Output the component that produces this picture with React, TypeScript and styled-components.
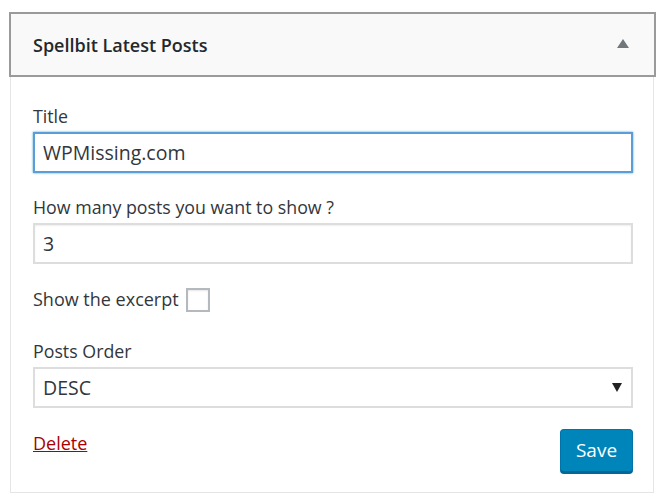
import React from "react";
import styled, { createGlobalStyle } from "styled-components";

const Global = createGlobalStyle`
  html, body { margin: 0; padding: 0; background: #ffffff; }
  body { font-family: "Open Sans", "Noto Sans", "Liberation Sans", sans-serif; color: #23282d; }
  * { box-sizing: border-box; }
`;

const Widget = styled.div`
  margin: 12px 0 0 9px;
  width: 647px;
`;

const Header = styled.div`
  height: 65px;
  border: 2px solid #9a9a9a;
  background: #f9f9f9;
  display: flex;
  align-items: center;
  justify-content: space-between;
  padding: 0 25px 0 22px;
`;

const HeaderTitle = styled.h3`
  margin: 0;
  font-size: 18px;
  font-weight: 600;
  color: #23282d;
  line-height: 24px;
`;

const Toggle = styled.span`
  width: 0;
  height: 0;
  border-left: 6px solid transparent;
  border-right: 6px solid transparent;
  border-bottom: 9px solid #72777c;
  margin-top: -2px;
`;

const Body = styled.div`
  margin: 0 2px 0 1px;
  border: 1px solid #e5e5e5;
  border-top: none;
  padding: 27px 20px 20px 22px;
  display: flex;
  flex-direction: column;
`;

const Field = styled.div<{ $gap?: number }>`
  display: flex;
  flex-direction: column;
  margin-top: ${(p) => p.$gap ?? 0}px;
`;

const Label = styled.label`
  font-size: 17.8px;
  line-height: 24px;
  color: #32373c;
  margin-bottom: 4px;
`;

const TextInput = styled.input<{ $focus?: boolean }>`
  width: 100%;
  height: 41px;
  font-family: inherit;
  font-size: 19.5px;
  color: #32373c;
  padding: 0 8px;
  background: #fff;
  border: 2px solid ${(p) => (p.$focus ? "#5b9dd9" : "#dddddd")};
  box-shadow: ${(p) => (p.$focus ? "0 0 2px rgba(30,140,190,0.8)" : "inset 0 1px 2px rgba(0,0,0,0.07)")};
  outline: none;
  border-radius: 0;
`;

const CheckRow = styled.div`
  display: flex;
  align-items: center;
  gap: 7px;
  margin-top: 22px;
  height: 26px;
`;

const CheckText = styled.span`
  font-size: 18px;
  line-height: 24px;
  color: #32373c;
`;

const CheckBox = styled.span`
  width: 24px;
  height: 24px;
  border: 2px solid #b4b9be;
  background: #fff;
  box-shadow: inset 0 1px 2px rgba(0, 0, 0, 0.1);
  margin-top: 2px;
`;

const SelectBox = styled.div`
  height: 41px;
  border: 2px solid #dddddd;
  background: #fff;
  display: flex;
  align-items: center;
  justify-content: space-between;
  padding: 0 9px 0 8px;
  font-size: 19.5px;
  color: #32373c;
`;

const SelectArrow = styled.span`
  width: 0;
  height: 0;
  border-left: 5px solid transparent;
  border-right: 5px solid transparent;
  border-top: 9px solid #222;
`;

const Actions = styled.div`
  display: flex;
  justify-content: space-between;
  align-items: flex-start;
  margin-top: 21px;
`;

const DeleteLink = styled.a`
  font-size: 18px;
  line-height: 24px;
  color: #a00;
  text-decoration: underline;
  margin-top: 2px;
  cursor: pointer;
`;

const SaveButton = styled.button`
  width: 73px;
  height: 43px;
  background: #0085ba;
  border: 1px solid #0073aa;
  border-bottom-color: #006799;
  box-shadow: 0 2px 0 #006799;
  border-radius: 4px;
  color: #fff;
  font-family: inherit;
  font-size: 19px;
  padding: 0 0 2px;
  cursor: pointer;
`;

export default function App() {
  return (
    <>
      <Global />
      <Widget>
        <Header>
          <HeaderTitle>Spellbit Latest Posts</HeaderTitle>
          <Toggle />
        </Header>
        <Body>
          <Field>
            <Label>Title</Label>
            <TextInput $focus defaultValue="WPMissing.com" />
          </Field>
          <Field $gap={22}>
            <Label>How many posts you want to show ?</Label>
            <TextInput defaultValue="3" />
          </Field>
          <CheckRow>
            <CheckText>Show the excerpt</CheckText>
            <CheckBox />
          </CheckRow>
          <Field $gap={27}>
            <Label>Posts Order</Label>
            <SelectBox>
              <span>DESC</span>
              <SelectArrow />
            </SelectBox>
          </Field>
          <Actions>
            <DeleteLink>Delete</DeleteLink>
            <SaveButton>Save</SaveButton>
          </Actions>
        </Body>
      </Widget>
    </>
  );
}
